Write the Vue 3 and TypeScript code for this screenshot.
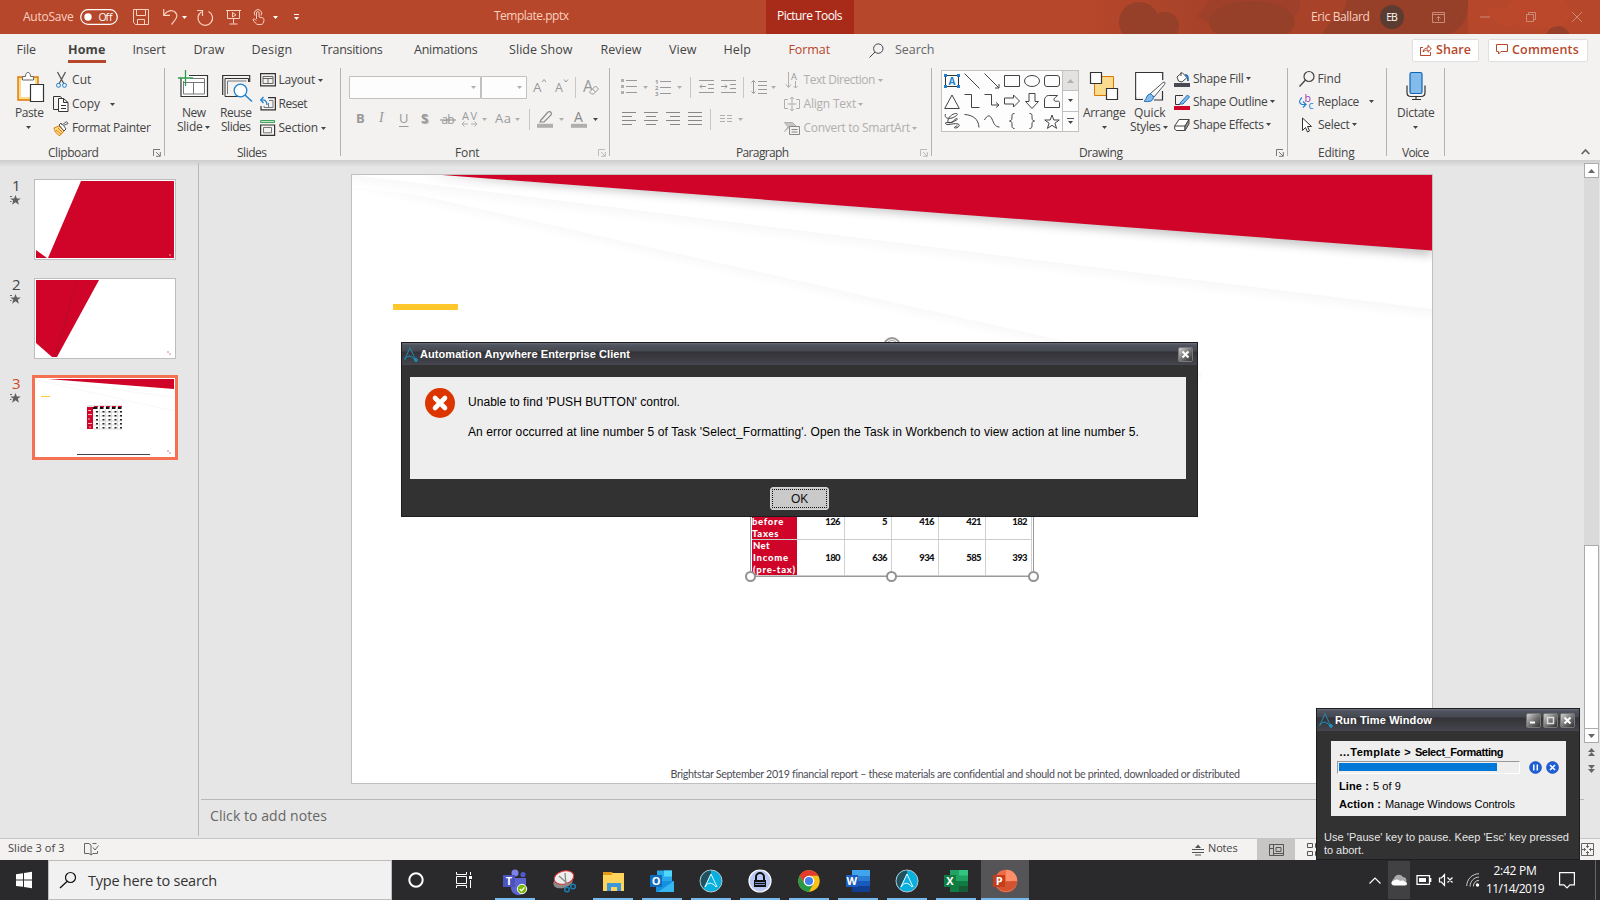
<script setup lang="ts">
import { defineComponent, h } from 'vue'
import type { PropType } from 'vue'

/* [left edge, width, text or @icon, optional class] */
type Item = [number, number, string, string?]

/* name: [width, height, markup] */
const icons: Record<string, [number, number, string]> = {
  v: [5, 3, '<path d="M0 0h5L2.5 3z" fill="currentColor" stroke="none"/>'],
  up: [7, 4, '<path d="M0 4h7L3.5 0z" fill="#666" stroke="none"/>'],
  down: [7, 4, '<path d="M0 0h7L3.5 4z" fill="#666" stroke="none"/>'],
  bar: [1, 21, '<path d="M.5 0v21" stroke="#c8c6c4"/>'],
  save: [16, 16, '<path d="M.5.5h15v15h-13l-2-2zM3.500 .5v6h9v-6M4.500 15.500v-5h7v5"/>'],
  undo: [16, 16, '<path d="M.7 0v6.300h6.300M1 6C4 1.500 9 .5 12 3c3.500 3.500 2 6-3.500 12.500" stroke-width="1.200"/>'],
  redo: [17, 17, '<path d="M11.500 2.500a7.300 7.300 0 1 1-7 .3M0 1.500h5.500V7" stroke-width="1.200"/>'],
  show: [16, 16, '<path d="M0 1.500h15M1.500 1.500v8h12v-8M7.500 9.500v5M3.500 15h8M6.500 3.500v4.500l3.500-2.200z"/>'],
  touch: [13, 16, '<path d="M3 6.500a3.700 3.700 0 1 1 6 0M4.500 10V4a1.300 1.300 0 0 1 2.600 0v4l4 1c1 .5.800 1.300.8 2.500 0 2-1 4-3 4H6c-1.800 0-3.500-2.500-5-4.800 0-1.200 1.800-1 3.500 1"/>'],
  more: [5, 6, '<path d="M0 .5h5" stroke="#fff"/><path d="M0 3h5L2.500 6z" fill="#fff" stroke="none"/>'],
  toggle: [38, 16, '<rect x=".7" y=".7" width="36.600" height="14.600" rx="7.300" stroke="#fff" stroke-width="1.200"/><circle cx="8" cy="8" r="3.700" fill="#fff" stroke="none"/><text x="18.500" y="12" font-size="10.500" fill="#fff" stroke="none" textLength="14">Off</text>'],
  eb: [24, 24, '<circle cx="12" cy="12" r="12" fill="#5c3b31" stroke="none"/><text x="6.300" y="15.800" font-size="10.500" fill="#fff" stroke="none" textLength="11.500">EB</text>'],
  ribbonopt: [13, 11, '<path d="M.5.5h12v10H.5zM.5 2.500h12M6.500 9V4.500M4.500 6.500l2-2 2 2"/>'],
  min: [10, 2, '<path d="M0 1h10"/>'],
  restore: [10, 10, '<path d="M.5 2.500h7v7h-7zM2.500 2.500v-2h7v7h-2"/>'],
  close: [10, 10, '<path d="M0 0l10 10M10 0L0 10"/>'],
  search: [15, 15, '<circle cx="9.300" cy="5.600" r="4.700"/><path d="M6 9L.5 14.500"/>'],
  share: [12, 12, '<path d="M3 3.500H.5v8h10V8M3 8c.5-3 2-4 5-4V1.200L11.300 5 8 8.200V6C6 6 4.500 6.500 3 8z" stroke="#b7472a"/>'],
  comment: [12, 11, '<path d="M.5.5h11v7H5l-2.500 2.500V7.500h-2z" stroke="#b7472a"/>'],
  launch: [8, 8, '<path d="M.5 7V.5H7M3 3l4 4M7.300 3v4.300H3" />'],
  chev: [9, 6, '<path d="M.7 5l3.800-4 3.800 4" stroke="#666" stroke-width="1.800"/>'],

  paste: [28, 34, '<path d="M1 7h20v23H1z" fill="#fbdb8e" stroke="#de7900" stroke-width="1.400"/><path d="M4 10h14v17H4z" fill="#fff" stroke="none"/><path d="M5.500 10V6.500h3C8.500 1 13.500 1 13.500 6.500h3V10z" fill="#fff" stroke="#666"/><path d="M13.500 14.500h13v17h-13z" fill="#fff" stroke="#333" stroke-width="1.200"/>'],
  cut: [11, 16, '<path d="M1.500 0L8 12M9.500 0L3 12" stroke="#555" stroke-width="1.300"/><circle cx="2.500" cy="13.300" r="2" stroke="#1e81cf"/><circle cx="8.500" cy="13.300" r="2" stroke="#1e81cf"/>'],
  copy: [16, 16, '<path d="M5 13.500H.5V.5h7l1.500 2" stroke="#333"/><path d="M5.500 2.500h5l4.500 4v9H5.500zM10.500 2.500v4H15" fill="#fff" stroke="#333"/><path d="M8 9.500h5M8 12.500h5" stroke="#333"/>'],
  painter: [16, 15, '<path d="M1 7l5-2 5 5-4 4.500c-2 0-5-3-6-7.500z" fill="#fbdb8e" stroke="#de7900"/><path d="M3 9l5 4M5 7l4.500 4.500" stroke="#de7900"/><path d="M6 4l5 6 2-2-2.500-3.500L15 2.500 13.500.7 9 4 8 2z" fill="#fff" stroke="#555"/>'],
  newslide: [31, 34, '<path d="M3 8v18.500h26.500V5.500H11" fill="#fff" stroke="#333" stroke-width="1.200"/><path d="M5.500 11v13h21V8.500H12M5.500 12.500h21M15.500 12.500V24" stroke="#777"/><path d="M7.500 0v16M0 8h15" stroke="#2b9e4b" stroke-width="1.300"/>'],
  reuse: [31, 34, '<path d="M.7 25V5.500h27V12" stroke="#333" stroke-width="1.200"/><path d="M3 26.500V8.500h23.500V12M3 26.500h16" stroke="#333"/><path d="M5.500 24V11h19" stroke="#777"/><circle cx="18.500" cy="20.500" r="6.300" fill="#fff" stroke="#1e81cf" stroke-width="1.300"/><path d="M23 25l7 6.500" stroke="#1e81cf" stroke-width="1.500"/>'],
  layout: [16, 14, '<path d="M.6.6h14.800v12.300H.6z" stroke="#333" stroke-width="1.200"/><path d="M3 3.500h10v7H3zM3 5.500h10M8 5.500v5" stroke="#666"/>'],
  reset: [16, 14, '<path d="M8 .6h7.400v12.300H1V9" stroke="#333" stroke-width="1.200"/><path d="M9 3.500h4v7H4V9M8.500 6v4" stroke="#777"/><path d="M3.500 0L.7 3l2.800 3M.7 3C5 2.500 7 4 7 8" stroke="#1e81cf" stroke-width="1.300"/>'],
  section: [16, 16, '<path d="M.6.6h14v1.800H.6z" stroke="#2b9e4b"/><path d="M.6 5h14v10.300H.6z" stroke="#333" stroke-width="1.200"/><path d="M3.500 7.500h8v5.300h-8z" stroke="#777"/>'],

  combo1: [132, 23, '<path d="M.5.500h131v22H.5z" fill="#fdfdfd" stroke="#c3c1bf"/><path d="M122 10h5l-2.500 3z" fill="#b1aeab" stroke="none"/>'],
  combo2: [46, 23, '<path d="M.5.500h45v22H.5z" fill="#fdfdfd" stroke="#c3c1bf"/><path d="M36 10h5l-2.500 3z" fill="#b1aeab" stroke="none"/>'],
  grow: [14, 16, '<text x="0" y="13" font-size="13.500" fill="#999" stroke="none">A</text><path d="M9 3l2-2.500L13 3" stroke="#999"/>'],
  shrink: [14, 16, '<text x="0" y="13" font-size="12.500" fill="#999" stroke="none">A</text><path d="M9 .5L11 3l2-2.500" stroke="#999"/>'],
  clear: [17, 18, '<text x="0" y="14" font-size="16" fill="#999" stroke="none">A</text><path d="M7.500 13l5-5 3 3-5 5h-2l-2-2zM9.500 11l3 3" fill="#f3f2f1" stroke="#999"/>'],
  ab: [16, 14, '<text x="1.500" y="11.500" font-size="12" fill="#999" stroke="none" textLength="13">ab</text><path d="M0 8h16" stroke="#888"/>'],
  av: [16, 16, '<text x="0" y="8.500" font-size="11" fill="#999" stroke="none" textLength="15">AV</text><path d="M0 13h6M9 13h6M2.500 10.500L0 13l2.500 2.500M12.500 10.500L15 13l-2.500 2.500"/>'],
  hl: [16, 17, '<path d="M4 9l7-8c3-1 4 1 3 3L7 11H3z" stroke="#888" stroke-width="1.200"/><path d="M0 12.800h16v4H0z" fill="#b1aeab" stroke="none"/>'],
  fc: [16, 17, '<text x="3" y="10.500" font-size="14" fill="#888" stroke="none">A</text><path d="M0 12.800h16v4H0z" fill="#b1aeab" stroke="none"/>'],
  bullets: [16, 16, '<path d="M5 1.500h11M5 7.500h11M5 13.500h11" stroke="#999"/><path d="M0 0h3v3H0zM0 6h3v3H0zM0 12h3v3H0z" fill="#b1aeab" stroke="none"/>'],
  numbers: [16, 17, '<path d="M5 2.500h11M5 8.500h11M5 14.500h11" stroke="#999"/><text font-size="6" fill="#999" stroke="none" font-weight="700"><tspan x="0" y="5">1</tspan><tspan x="0" y="11">2</tspan><tspan x="0" y="17">3</tspan></text>'],
  outdent: [15, 14, '<path d="M0 .5h15M9 4.500h6M9 8.500h6M0 12.500h15M1 6.500h6M3 4.500l-2 2 2 2" stroke="#999"/>'],
  indent: [15, 14, '<path d="M0 .5h15M9 4.500h6M9 8.500h6M0 12.500h15M0 6.500h6M4 4.500l2 2-2 2" stroke="#999"/>'],
  spacing: [16, 16, '<path d="M7 2.500h9M7 6.500h9M7 10.500h9M7 14.500h9M2.500 1.500v13M.5 3.500l2-2 2 2M.5 12.500l2 2 2-2" stroke="#999"/>'],
  al: [14, 14, '<path d="M0 .5h14M0 4.500h10M0 8.500h14M0 12.500h10" stroke="#888"/>'],
  ac: [14, 14, '<path d="M0 .5h14M2 4.500h10M0 8.500h14M2 12.500h10" stroke="#888"/>'],
  ar: [14, 14, '<path d="M0 .5h14M4 4.500h10M0 8.500h14M4 12.500h10" stroke="#888"/>'],
  aj: [14, 14, '<path d="M0 .5h14M0 4.500h14M0 8.500h14M0 12.500h14" stroke="#888"/>'],
  cols: [12, 8, '<path d="M0 .5h5M7 .5h5M0 3.500h5M7 3.500h5M0 6.500h5M7 6.500h5"/>'],
  tdir: [15, 17, '<path d="M3.500 0v15M1 12.500l2.500 3 2.500-3M10.500 9v7M8.500 14l2 2 2-2"/><text x="6" y="7.500" font-size="9.500" fill="#999" stroke="none">A</text>'],
  atext: [16, 15, '<path d="M4 2.500H.5v9H4M12 2.500h3.500v9H12M8 0v14M6 2l2-2 2 2M6 12l2 2 2-2M3.500 7h9"/>'],
  smart: [16, 14, '<path d="M.5 1.500h8l4 4H6L.5 10.500 4 6z" fill="#c8c6c4"/><path d="M5.500 5.500h10v8h-10zM7.500 8.500h6M7.500 11h6" fill="#f3f2f1" stroke="#888"/>'],

  tb: [16, 14, '<path d="M1.500 1.500h13v11h-13z" stroke="#333"/><path d="M0 0h3v3H0zM13 0h3v3h-3zM0 11h3v3H0zM13 11h3v3h-3z" fill="#1e81cf" stroke="none"/><text x="4.500" y="10.800" font-size="10" font-weight="700" fill="#1e81cf" stroke="none">A</text>'],
  line: [16, 16, '<path d="M.5.5l15 15"/>'],
  arrow: [16, 16, '<path d="M.5.5l14 14M15 11v4h-4"/>'],
  rect: [16, 12, '<path d="M.5.500h15v11H.5z"/>'],
  oval: [16, 12, '<ellipse cx="8" cy="6" rx="7.500" ry="5.500"/>'],
  rrect: [16, 12, '<rect x=".5" y=".5" width="15" height="11" rx="2.500"/>'],
  tri: [16, 15, '<path d="M8 1l7.300 13.500H.7z"/>'],
  elbow: [16, 14, '<path d="M.5.5h7v13h8"/>'],
  elbowa: [16, 16, '<path d="M.5 1.500h7v10.500h7M12 9.500l3 2.500-3 2.500"/>'],
  rarr: [16, 14, '<path d="M.5 4h9V1l6 6-6 6v-3h-9z"/>'],
  darr: [14, 16, '<path d="M4 .5h6v8h3.500l-6.500 7-6.500-7H4z"/>'],
  free: [16, 15, '<path d="M4.500 1.500h9c-1 2-4 2-3.500 4.500 1 3 5-.5 5.500 2.500v5H.5V6c0-2 1.500-4.500 4-4.500z"/>'],
  scrib: [16, 16, '<path d="M1.500 1C0 5 4 6 8 5c4-1.500 7-4 4.500-4.500S5 3 4 7c-1 4 4 3.500 6.500 0 2-3 4-1 2 0S8 10 4 9.500s-3 2 0 2 7-1.500 10-.5 0 4-2.500 4-.5-2 2-2"/>'],
  arc: [16, 14, '<path d="M.5.5C9 1 14.500 5 15 13.500"/>'],
  curve: [16, 13, '<path d="M.5 5C3 0 6-.5 8 4s3 8 7.500 8"/>'],
  lb: [6, 16, '<path d="M5.500.5C3 .5 3 1.500 3 3.500S3 8 .5 8C3 8 3 10 3 12s0 3.500 2.500 3.500"/>'],
  rb: [6, 16, '<path d="M.5.5C3 .5 3 1.500 3 3.500S3 8 5.500 8C3 8 3 10 3 12s0 3.500-2.500 3.500"/>'],
  star: [16, 15, '<path d="M8 1l1.800 5h5.500l-4.400 3.200 1.700 5.200L8 11.300l-4.600 3.100 1.700-5.200L.7 6h5.500z"/>'],
  arrange: [28, 34, '<path d="M4.500 6.500h19v19h-19z" fill="#fbdb8e" stroke="#de7900"/><path d="M.5 2.500h11v11H.5zM16.500 18.500h11v11h-11z" fill="#fff" stroke="#333" stroke-width="1.200"/>'],
  quick: [31, 34, '<path d="M8 29.500H.7V2.500h27V10M27.500 21v9H19" fill="none" stroke="#333" stroke-width="1.200"/><path d="M1.500 3h25v12l-12 12h-13z" fill="#fff" stroke="none"/><path d="M15 24L28 12.500c2-1 2.500 0 1.500 2L19 27z" fill="#fff" stroke="#555"/><path d="M9 31c3-1 2-7 6.500-7 4 1 4 7-1.500 7.500-2 .3-4 0-5-.5z" fill="#83bcec" stroke="#1e6fb8"/>'],
  fill: [16, 16, '<path d="M3 6l5-4.500 5 5-5 4.500-3.500-1z" fill="#fff" stroke="#444"/><path d="M7 5V1.500" stroke="#444"/><path d="M11 4c3 0 3 2 3 6" stroke="#1e6fb8" stroke-width="1.800"/><path d="M0 12h16v4H0z" fill="#4a4a55" stroke="none"/>'],
  outline: [16, 16, '<path d="M9 1.500H1.500v9H6" stroke="#333"/><path d="M6 9l7.500-8 2 2L9 10H6z" fill="#83bcec" stroke="#1e6fb8"/><path d="M0 12h16v4H0z" fill="#d10429" stroke="none"/>'],
  effects: [16, 14, '<path d="M.7 8L5 1.500h10L11 8zM.7 8v3l1.500 1.500H11L11 8" fill="#fff" stroke="#444"/><path d="M11 8l4-6.500v4.500L11 12.500z" fill="#999" stroke="#444"/>'],
  find: [16, 16, '<circle cx="10" cy="5.500" r="5" stroke="#444" stroke-width="1.200"/><path d="M6.500 9L.5 15.500" stroke="#444" stroke-width="1.300"/>'],
  replace: [15, 17, '<text x="5.500" y="8.500" font-size="10.500" fill="#a33bb5" stroke="none">b</text><text x="9.500" y="16" font-size="10.500" fill="#1e81cf" stroke="none">c</text><path d="M3 4.500c-3.500 3-3 6 0 7h3.500M4 8.500l3 3-3 3" stroke="#1e81cf" stroke-width="1.200"/>'],
  select: [11, 16, '<path d="M1.500 1v12.500l3-3 2 4.500 2-1-2-4.500h4z" fill="#fff" stroke="#333"/>'],
  mic: [20, 34, '<rect x="4" y="2.500" width="12" height="21" rx="1.500" fill="#83bcec" stroke="#1265b0" stroke-width="1.200"/><path d="M1 15.500v7c0 3 1.500 4 4 4h10c2.500 0 4-1 4-4v-7M10 26.500v3M6 29.500h9" stroke="#333" stroke-width="1.200"/>'],

  anim: [11, 10, '<path d="M5.500 0l1.400 3.400h3.900L7.800 5.700l1.100 4-3.400-2.400-3.400 2.400 1.100-4-3-2.300h3.900z" fill="#606060" stroke="none"/><path d="M0 1.500h2M0 6.500h1.500" stroke="#666"/>'],
  spell: [15, 13, '<path d="M7 12L5 10.500H.5V.5H5l2 1.500v10l2-1.500h4.500V8M8.500.500h4M9 4.500l2 2.500 3.500-4.500" stroke="#666"/>'],
  notes: [12, 11, '<path d="M0 5.500h12M0 8.500h12M3 11h6" stroke="#555"/><path d="M3 4l3-3.500L9 4z" fill="#555" stroke="none"/>'],
  normal: [15, 12, '<path d="M.5.500h14v11H.5zM4.500 1v10M.5 4.500h4M7 3.500h5v4H7zM5 9.500h9" stroke="#555"/>'],
  sorter: [15, 14, '<path d="M.5.500h5v4h-5zM.5 8.500h5v4h-5zM8.500.500h5v4h-5zM8.500 8.500h5v4h-5z" stroke="#555"/>'],
  fitw: [13, 13, '<path d="M.5.500h12v12H.5zM6.500 1v4M6.500 8v4M1 6.500h4M8 6.500h4M5 3.500h3M5 9.500h3M3.500 5v3M9.500 5v3" stroke="#666"/>'],

  win: [16, 16, '<path d="M0 2.200L7 1.200v6.300H0zM8 1l8-1.200v7.700H8zM0 8.500h7v6.300L0 14zM8 8.500h8v7.700L8 15z" fill="#fff" stroke="none"/>'],
  find2: [16, 16, '<circle cx="10.500" cy="5.500" r="5" stroke="#111" stroke-width="1.200"/><path d="M7 9.500L0 16" stroke="#111" stroke-width="1.300"/>'],
  cortana: [16, 16, '<circle cx="8" cy="8" r="6.700" stroke="#fff" stroke-width="2"/>'],
  tview: [17, 16, '<path d="M.5 0v2.500h10V0M.5 16v-2.500h10V16M.5 4.500h10v7H.5zM14.500 0v3M14.500 8v8" stroke="#fff"/><path d="M13 4h3v3h-3z" fill="#fff" stroke="none"/>'],
  tup: [12, 7, '<path d="M.5 6.500L6 1l5.500 5.500" stroke="#fff" stroke-width="1.200"/>'],
  cloud: [17, 12, '<path d="M4 11a3.500 3.500 0 0 1-1-6.500A5 5 0 0 1 12 3c3 0 4 3 3 5z" fill="#aaa" stroke="none"/><path d="M3 11.500c-3-.3-4-4 0-5 3-1.500 4-1 6 .5 2-1 4-.5 4.500.8 3 0 3.500 3.500.5 3.700z" fill="#fff" stroke="none"/>'],
  battery: [16, 10, '<path d="M1 .7h12.500v8.600H1zM14.700 3v4" stroke="#fff" stroke-width="1.300"/><path d="M3 3h7v4H3z" fill="#fff" stroke="none"/>'],
  mute: [15, 12, '<path d="M.5 4v4h2L5.500 11.500V.5L2.500 4zM8.500 3.500l5 5M13.500 3.500l-5 5" stroke="#fff" stroke-width="1.200"/>'],
  wifi: [14, 14, '<path d="M.7 13C1 6 6 1 13 .7M4 13.500C4.300 8 8 4.300 13 4M7.300 13.500c.2-3.500 2.500-6 5.700-6.200" stroke="#ccc"/><circle cx="11.500" cy="12" r="1.700" fill="#fff" stroke="none"/>'],
  action: [16, 17, '<path d="M.6.6h14.800v12.300h-4.400l-3 3-3-3H.6z" stroke="#fff" stroke-width="1.200"/>'],
  aa: [14, 15, '<path d="M.7 12.500L6 .7l5.500 12" stroke="#2a7c98" stroke-width="1.100"/><path d="M.7 12.500c2-4 6-5 10 .2" stroke="#1496c8"/><circle cx="12" cy="13" r="1.300" stroke="#14b0ea"/>'],
  pause: [13, 13, '<circle cx="6.500" cy="6.500" r="6" fill="#1d5fd8" stroke="#1746a8" stroke-width=".6"/><path d="M4.800 3.500v6M8.300 3.500v6" stroke="#fff" stroke-width="1.500"/>'],
  stop: [13, 13, '<circle cx="6.500" cy="6.500" r="6" fill="#1d5fd8" stroke="#1746a8" stroke-width=".6"/><path d="M4 4l5 5M9 4L4 9" stroke="#fff" stroke-width="1.600"/>'],
  error: [30, 30, '<circle cx="15" cy="15" r="15" fill="#dc3500" stroke="none"/><path d="M10 10l10 10M20 10L10 20" stroke="#fff" stroke-width="4.600" stroke-linecap="round"/>'],
  wx: [15, 15, '<rect x=".5" y=".5" width="14" height="14" rx="1.500" fill="url(#chrome)" stroke="#777"/><path d="M4.500 4.500l6 6M10.500 4.500l-6 6" stroke="#fff" stroke-width="2"/>'],
  wmin: [15, 15, '<rect x=".5" y=".5" width="14" height="14" rx="1.500" fill="url(#chrome)" stroke="#777"/><path d="M4 9.500h5" stroke="#fff" stroke-width="2"/>'],
  wmax: [15, 15, '<rect x=".5" y=".5" width="14" height="14" rx="1.500" fill="url(#chrome)" stroke="#777"/><path d="M4.500 4.500h6v6h-6z" stroke="#ddd" stroke-width="1.500"/>'],

  teams: [24, 24, '<circle cx="12" cy="4" r="3.500" fill="#7b83eb" stroke="none"/><circle cx="20" cy="5.500" r="2.600" fill="#5059c9" stroke="none"/><path d="M8 9h15v8a6 6 0 0 1-15 3z" fill="#5b63d0" stroke="none"/><path d="M0 6h12v12H0z" fill="#4b53bc" stroke="none"/><text x="2.700" y="16.300" font-size="11" font-weight="700" fill="#fff" stroke="none">T</text><circle cx="19" cy="20" r="4.700" fill="#76b900" stroke="#fff"/><path d="M16.800 20l1.700 1.700 3-3.300" stroke="#fff" stroke-width="1.400"/>'],
  snip: [24, 24, '<ellipse cx="11" cy="13" rx="10" ry="6" fill="#8b8b8b" stroke="none" transform="rotate(-15 11 13)"/><ellipse cx="12" cy="8.500" rx="10" ry="6.500" fill="#eee" stroke="#d33" transform="rotate(-15 12 8.500)"/><path d="M7 7l10 9M13 4l1 12" stroke="#888" stroke-width="1.300"/><circle cx="15" cy="20.500" r="2.300" stroke="#1b7fb5" stroke-width="1.500"/><circle cx="21" cy="17.500" r="2.300" stroke="#1b7fb5" stroke-width="1.500"/>'],
  folder: [24, 24, '<path d="M2 3h8l2 1h11v18H2z" fill="#ffd35c" stroke="none"/><path d="M2 3h9v3H2z" fill="#e09a16" stroke="none"/><path d="M6 22v-8h14v8h-4v-4h-6v4z" fill="#3b97db" stroke="none"/>'],
  outlook: [24, 24, '<path d="M7 1.500h15V13H7z" fill="#28a8ea" stroke="none"/><path d="M14 1.500h8v6h-8z" fill="#50d9ff" stroke="none"/><path d="M6 12h18v11H6z" fill="#1490df" stroke="none"/><path d="M24 12L8 23h16z" fill="#35b8f1" stroke="none"/><path d="M0 6h12v12H0z" fill="#0f6cbd" stroke="none"/><text x="1.800" y="16" font-size="11" font-weight="700" fill="#fff" stroke="none">O</text>'],
  aabig: [24, 24, '<circle cx="12" cy="12" r="11" fill="#08b0e0" stroke="#b8c4c8"/><path d="M12 1.500a10.500 10.500 0 0 0-7.500 17.500L12 4z" fill="#24505e" stroke="none"/><path d="M6 18l6-13 6 13M6 18c3-5 7-5 11 0" stroke="#e8fbff"/>'],
  lock: [24, 24, '<circle cx="12" cy="12" r="11" fill="#b9c8f5" stroke="#fff" stroke-width="1.200"/><path d="M8 11V8a4 4 0 0 1 8 0v3" stroke="#111" stroke-width="2"/><path d="M6 11h12v7H6z" fill="#111" stroke="none"/><path d="M7 13.500h10M7 15.500h10" stroke="#7d8fca"/>'],
  chrome: [24, 24, '<circle cx="12" cy="12" r="10.700" fill="#fbc116" stroke="none"/><path d="M2.700 6.700A10.700 10.700 0 0 1 21.300 6.700H12l-4.600 8z" fill="#e33b2e" stroke="none"/><path d="M2.700 6.700A10.700 10.700 0 0 0 12 22.700l4.500-8-9 0z" fill="#269a48" stroke="none"/><circle cx="12" cy="12" r="4.700" fill="#3f80ed" stroke="#fff" stroke-width="1.300"/>'],
  word: [24, 24, '<path d="M6 1h18v6H6z" fill="#41a5ee" stroke="none"/><path d="M6 7h18v5H6z" fill="#2b7cd3" stroke="none"/><path d="M6 12h18v5H6z" fill="#185abd" stroke="none"/><path d="M6 17h18v6H6z" fill="#103f91" stroke="none"/><path d="M0 6h12v12H0z" fill="#1a5dbe" stroke="none"/><text x=".6" y="16" font-size="11" font-weight="700" fill="#fff" stroke="none">W</text>'],
  excel: [24, 24, '<path d="M6 1h18v11H6z" fill="#21a366" stroke="none"/><path d="M15 1h9v5.500h-9z" fill="#33c481" stroke="none"/><path d="M6 12h18v11H6z" fill="#107c41" stroke="none"/><path d="M15 17h9v6h-9z" fill="#185c37" stroke="none"/><path d="M0 6h12v12H0z" fill="#107c41" stroke="none"/><text x="2.300" y="16" font-size="11" font-weight="700" fill="#fff" stroke="none">X</text>'],
  ppt: [24, 24, '<circle cx="13" cy="12" r="11.300" fill="#ed6c47" stroke="none"/><path d="M13 .7a11.300 11.300 0 0 1 11.300 11.300H13z" fill="#ff8f6b" stroke="none"/><path d="M2 13a11.300 11.300 0 0 0 22.300-1z" fill="#d35230" stroke="none"/><path d="M0 6h12v12H0z" fill="#c43e1c" stroke="none"/><text x="2.800" y="16" font-size="11" font-weight="700" fill="#fff" stroke="none">P</text>'],
}

/* Spreads the letters of a label over a given width. */
function fit(el: HTMLElement, width: number) {
  const range = document.createRange()
  range.selectNodeContents(el)
  const natural = range.getBoundingClientRect().width
  const count = (el.textContent ?? '').length
  if (count) el.style.letterSpacing = `${(width - natural) / count}px`
}
const vFit = { mounted: (el: HTMLElement, b: { value: number }) => fit(el, b.value) }

const Icon = defineComponent({
  props: { name: { type: String, required: true } },
  setup: (p) => () => {
    const [w, hgt, markup] = icons[p.name]
    return h('svg', {
      class: 'icon', width: w, height: hgt, viewBox: `0 0 ${w} ${hgt}`,
      fill: 'none', stroke: 'currentColor', innerHTML: markup,
    })
  },
})

const Strip = defineComponent({
  props: {
    from: { type: Number, default: 0 },
    items: { type: Array as PropType<Item[]>, required: true },
  },
  setup: (p) => () => {
    let pos = p.from
    const kids = p.items.map(([x, w, what, cls]) => {
      const gap = x - pos
      pos = x + w
      const style = { marginLeft: `${gap}px`, width: `${w}px` }
      if (what.startsWith('@')) return h('span', { class: ['cell', cls], style }, [h(Icon, { name: what.slice(1) })])
      return h('span', {
        class: ['label', cls], style,
        onVnodeMounted: (n: any) => fit(n.el as HTMLElement, w - 0.5),
      }, what)
    })
    return h('div', { class: 'strip' }, kids)
  },
})

const titleItems: Item[] = [
  [23, 51, 'AutoSave'], [80, 38, '@toggle'], [133, 16, '@save'], [163, 16, '@undo'], [182, 5, '@v', 'white'],
  [197, 17, '@redo'], [226, 16, '@show'], [252, 13, '@touch'], [273, 5, '@v', 'white'], [294, 5, '@more'],
  [494, 75, 'Template.pptx', 'raise'],
  [1311, 59, 'Eric Ballard'], [1380, 24, '@eb'], [1432, 13, '@ribbonopt', 'dim'], [1480, 10, '@min', 'dim'],
  [1526, 10, '@restore', 'dim'], [1572, 10, '@close', 'dim'],
]
const tabs: Item[] = [
  [16.5, 20, 'File'], [68, 38, 'Home', 'on'], [132.5, 33.5, 'Insert'], [193.5, 31.5, 'Draw'], [251.5, 41.5, 'Design'],
  [321, 62, 'Transitions'], [414, 64, 'Animations'], [509, 64, 'Slide Show'], [600.5, 41.5, 'Review'],
  [669, 28, 'View'], [723.5, 28, 'Help'], [788.5, 42, 'Format', 'red'], [869, 15, '@search'], [895, 40, 'Search', 'grey'],
]
const clip: Item[][] = [
  [[56, 11, '@cut'], [72, 20, 'Cut']],
  [[53, 16, '@copy'], [72, 28.5, 'Copy'], [110, 5, '@v']],
  [[53, 16, '@painter'], [72, 79, 'Format Painter']],
]
const slideRows: Item[][] = [
  [[260, 16, '@layout'], [278.5, 37, 'Layout'], [318, 5, '@v']],
  [[260, 16, '@reset'], [278.5, 29, 'Reset']],
  [[260, 16, '@section'], [278.5, 40, 'Section'], [321, 5, '@v']],
]
const font1: Item[] = [
  [349, 132, '@combo1'], [481, 46, '@combo2'], [533, 14, '@grow'], [555, 14, '@shrink'], [575, 1, '@bar'], [583, 17, '@clear'],
]
const font2: Item[] = [
  [356, 8, 'B', 'fmt b'], [379, 6, 'I', 'fmt i'], [399, 10, 'U', 'fmt u'], [421, 8, 'S', 'fmt b s'], [440, 16, '@ab'],
  [462, 16, '@av'], [482, 5, '@v'], [495, 17, 'Aa', 'fmt'], [515, 5, '@v'], [529, 1, '@bar'],
  [537, 16, '@hl'], [559, 5, '@v'], [571, 16, '@fc'], [593, 5, '@v', 'dark'],
]
const para1: Item[] = [
  [621, 16, '@bullets'], [643, 5, '@v'], [655, 16, '@numbers'], [677, 5, '@v'], [690, 1, '@bar'],
  [699, 15, '@outdent'], [721, 15, '@indent'], [743, 1, '@bar'], [751, 16, '@spacing'], [771, 5, '@v'],
]
const para2: Item[] = [
  [622, 14, '@al'], [644, 14, '@ac'], [666, 14, '@ar'], [688, 14, '@aj'], [710, 1, '@bar'], [720, 12, '@cols'], [738, 5, '@v'],
]
const paraRows: Item[][] = [
  [[785, 15, '@tdir'], [803.5, 72, 'Text Direction'], [878, 5, '@v']],
  [[784, 16, '@atext'], [803.5, 53, 'Align Text'], [858, 5, '@v']],
  [[784, 16, '@smart'], [803.5, 107, 'Convert to SmartArt'], [912, 5, '@v']],
]
const shapes = ['tb', 'line', 'arrow', 'rect', 'oval', 'rrect', 'tri', 'elbow', 'elbowa', 'rarr', 'darr', 'free', 'scrib', 'arc', 'curve', 'lb', 'rb', 'star']
const drawRows: Item[][] = [
  [[1174, 16, '@fill'], [1193, 51, 'Shape Fill'], [1246, 5, '@v']],
  [[1174, 16, '@outline'], [1193, 75, 'Shape Outline'], [1270, 5, '@v']],
  [[1174, 16, '@effects'], [1193, 71, 'Shape Effects'], [1266, 5, '@v']],
]
const editRows: Item[][] = [
  [[1299, 16, '@find'], [1317.5, 24, 'Find']],
  [[1299, 15, '@replace'], [1317.5, 42, 'Replace'], [1369, 5, '@v']],
  [[1301, 11, '@select'], [1318, 32, 'Select'], [1352, 5, '@v']],
]
const statusItems: Item[] = [
  [8, 57, 'Slide 3 of 3'], [84, 15, '@spell'], [1192, 12, '@notes'], [1208, 30, 'Notes'],
  [1257, 38, '@normal', 'picked'], [1307, 15, '@sorter'], [1581, 13, '@fitw'],
]
const trayItems: Item[] = [
  [1369, 12, '@tup'], [1388, 22, '@cloud', 'lit'], [1416, 16, '@battery'], [1439, 15, '@mute'], [1466, 14, '@wifi'],
]
const apps = [
  { icon: 'teams', run: true }, { icon: 'snip', run: false }, { icon: 'folder', run: true }, { icon: 'outlook', run: true },
  { icon: 'aabig', run: true }, { icon: 'lock', run: true }, { icon: 'chrome', run: true }, { icon: 'word', run: true },
  { icon: 'aabig', run: true }, { icon: 'excel', run: true }, { icon: 'ppt', run: true, active: true },
]
const rows = [
  { labels: [['before', 32], ['Taxes', 27]] as [string, number][], values: [126, 5, 416, 421, 182] },
  { labels: [['Net', 17], ['Income', 36], ['(pre-tax)', 43]] as [string, number][], values: [180, 636, 934, 585, 393] },
]
</script>

<template>
  <div class="desktop">
    <svg class="defs" width="0" height="0">
      <defs>
        <linearGradient id="chrome" x1="0" y1="0" x2="1" y2="1">
          <stop offset="0" stop-color="#d8d8d8" /><stop offset=".5" stop-color="#777" /><stop offset="1" stop-color="#2c2c2c" />
        </linearGradient>
      </defs>
    </svg>

    <header class="titlebar">
      <svg class="clouds" width="520" height="34" viewBox="0 0 520 34">
        <defs>
          <linearGradient id="fade" x1="0" x2="1" y1="0" y2="0">
            <stop offset="0" stop-color="#a8432a" stop-opacity="0" /><stop offset=".3" stop-color="#a8432a" />
          </linearGradient>
        </defs>
        <rect width="388" height="34" fill="url(#fade)" />
        <g fill="#963f29">
          <circle cx="59" cy="22" r="20" /><circle cx="85" cy="26" r="14" />
          <path d="M130 0h90v10q-20 24-44 12-30 14-60-6z" opacity=".5" />
          <ellipse cx="172" cy="22" rx="43" ry="21" />
          <path d="M243 34c4-14 20-14 24-34h121c0 20-6 28-18 34z" />
          <circle cx="478" cy="38" r="12" />
        </g>
        <path d="M405 12q10-8 20-2 4-14 30-10h30q14 20-6 26-20 6-40-2-16 6-24-4z" fill="#c24a2b" opacity=".5" />
      </svg>
      <Strip class="title-strip" :items="titleItems" />
      <div class="picture-tools"><span v-fit="65">Picture Tools</span></div>
    </header>

    <nav class="tabs">
      <Strip :items="tabs" />
      <div class="actions">
        <button class="share"><Icon name="share" /><span v-fit="35">Share</span></button>
        <button class="comments"><Icon name="comment" /><span v-fit="67">Comments</span></button>
      </div>
    </nav>

    <section class="ribbon">
      <div class="group g-clip">
        <div class="body">
          <div class="big w50">
            <Strip class="pic" :items="[[17, 28, '@paste']]" />
            <Strip class="l1" :items="[[15, 29, 'Paste']]" />
            <Strip class="l2" :items="[[26, 5, '@v']]" />
          </div>
          <div class="rows24"><Strip v-for="(r, i) in clip" :key="i" :from="50" :items="r" /></div>
        </div>
        <Strip class="foot" :items="[[48, 51, 'Clipboard'], [153, 8, '@launch', 'mid']]" />
      </div>
      <div class="group g-slides">
        <div class="body">
          <div class="big w50">
            <Strip class="pic" :from="165" :items="[[178, 31, '@newslide']]" />
            <Strip class="l1" :from="165" :items="[[182, 24, 'New']]" />
            <Strip class="l2" :from="165" :items="[[177, 26, 'Slide'], [205, 5, '@v']]" />
          </div>
          <div class="big w40">
            <Strip class="pic" :from="215" :items="[[222, 31, '@reuse']]" />
            <Strip class="l1" :from="215" :items="[[220, 32, 'Reuse']]" />
            <Strip class="l2" :from="215" :items="[[221, 30, 'Slides']]" />
          </div>
          <div class="rows24"><Strip v-for="(r, i) in slideRows" :key="i" :from="255" :items="r" /></div>
        </div>
        <Strip class="foot" :from="165" :items="[[237, 30, 'Slides']]" />
      </div>
      <div class="group g-font off">
        <div class="body stack">
          <Strip class="r1" :from="341" :items="font1" />
          <Strip class="r2" :from="341" :items="font2" />
        </div>
        <Strip class="foot" :from="341" :items="[[455, 25, 'Font'], [598, 8, '@launch', 'pale']]" />
      </div>
      <div class="group g-para off">
        <div class="body">
          <div class="stack w170">
            <Strip class="r1" :from="610" :items="para1" />
            <Strip class="r2" :from="610" :items="para2" />
          </div>
          <div class="rows24"><Strip v-for="(r, i) in paraRows" :key="i" :from="780" :items="r" /></div>
        </div>
        <Strip class="foot" :from="610" :items="[[736, 53, 'Paragraph'], [920, 8, '@launch', 'pale']]" />
      </div>
      <div class="group g-draw">
        <div class="body">
          <div class="gallery">
            <div class="shapes"><span v-for="s in shapes" :key="s"><Icon :name="s" /></span></div>
            <div class="spin"><i class="pale"><Icon name="up" /></i><i><Icon name="v" /></i><i><b></b><Icon name="v" /></i></div>
          </div>
          <div class="big w48">
            <Strip class="pic" :from="1079" :items="[[1090, 28, '@arrange']]" />
            <Strip class="l1" :from="1079" :items="[[1083, 43, 'Arrange']]" />
            <Strip class="l2" :from="1079" :items="[[1102, 5, '@v']]" />
          </div>
          <div class="big w43">
            <Strip class="pic" :from="1127" :items="[[1135, 31, '@quick']]" />
            <Strip class="l1" :from="1127" :items="[[1134, 32, 'Quick']]" />
            <Strip class="l2" :from="1127" :items="[[1130, 31, 'Styles'], [1163, 5, '@v']]" />
          </div>
          <div class="rows23"><Strip v-for="(r, i) in drawRows" :key="i" :from="1170" :items="r" /></div>
        </div>
        <Strip class="foot" :from="932" :items="[[1079, 44, 'Drawing'], [1276, 8, '@launch', 'mid']]" />
      </div>
      <div class="group g-edit">
        <div class="body">
          <div class="rows23"><Strip v-for="(r, i) in editRows" :key="i" :from="1288" :items="r" /></div>
        </div>
        <Strip class="foot" :from="1288" :items="[[1318, 37, 'Editing']]" />
      </div>
      <div class="group g-voice">
        <div class="body">
          <div class="big">
            <Strip class="pic" :from="1387" :items="[[1406, 20, '@mic']]" />
            <Strip class="l1" :from="1387" :items="[[1397, 38, 'Dictate']]" />
            <Strip class="l2" :from="1387" :items="[[1413, 5, '@v']]" />
          </div>
        </div>
        <Strip class="foot" :from="1387" :items="[[1402, 27, 'Voice']]" />
      </div>
      <div class="collapse"><Icon name="chev" /></div>
    </section>

    <main class="workspace">
      <aside class="nav">
        <div class="thumb">
          <div class="num"><span>1</span><Icon name="anim" /></div>
          <div class="frame">
            <svg width="138" height="77" viewBox="0 0 138 77">
              <path d="M45 0h93v77H12zM0 69l11 8H0z" fill="#d00428" /><path d="M133 74h2" stroke="#f3a0ae" />
            </svg>
          </div>
        </div>
        <div class="thumb">
          <div class="num"><span>2</span><Icon name="anim" /></div>
          <div class="frame">
            <svg width="138" height="77" viewBox="0 0 138 77">
              <path d="M0 0h63L21 77h-5L0 63z" fill="#d00428" /><path d="M41 0L19 77" stroke="#bb0a2a" stroke-width="1.500" />
              <path d="M131 72h2" stroke="#999" /><path d="M133 74h2" stroke="#f07a8c" />
            </svg>
          </div>
        </div>
        <div class="thumb current">
          <div class="num"><span>3</span><Icon name="anim" /></div>
          <div class="frame">
            <svg width="138" height="78" viewBox="0 0 138 78">
              <path d="M12 0h126v10z" fill="#d00428" /><path d="M0 1l138 17M0 1l138 31" stroke="#f8f8f8" />
              <path d="M5 17.500h9" stroke="#ffc72c" />
              <path d="M51 27h35" stroke="#ccc" /><path d="M57 29h29" stroke="#111" stroke-width="2" stroke-dasharray="4.500 1.500" />
              <path d="M58 27.500h28" stroke="#d00428" stroke-dasharray="4 2" />
              <path d="M51 28h6v22h-6z" fill="#d00428" /><path d="M52 31.500h3M52 35.500h4M52 40h2M52 44.500h4M53 48h2" stroke="#f5b5c0" />
              <path d="M57 33h29M57 37h29M57 42h29M57 46h29M57 50h29M63.500 28v22M69.500 28v22M75.500 28v22M81.500 28v22" stroke="#ddd" />
              <path d="M61 32v18M67.500 32v18M73.500 32v18M79.500 32v18M85 32v18" stroke="#222" stroke-width="2" stroke-dasharray="1.500 2.500" />
              <path d="M41 75.500h73" stroke="#445" stroke-width="1.200" /><path d="M131 72h2" stroke="#999" /><path d="M133 74h2" stroke="#f07a8c" />
            </svg>
          </div>
        </div>
      </aside>

      <section class="main">
        <div class="slide">
          <svg width="1080" height="608" viewBox="0 0 1080 608">
            <defs>
              <filter id="soft" x="-5%" y="-20%" width="110%" height="160%"><feGaussianBlur stdDeviation="5" /></filter>
              <linearGradient id="ray1" gradientUnits="userSpaceOnUse" x1="540" y1="67" x2="538.500" y2="79"><stop offset="0" stop-color="#f8f8f8" /><stop offset="1" stop-color="#fff" /></linearGradient>
              <linearGradient id="ray2" gradientUnits="userSpaceOnUse" x1="540" y1="127" x2="537.500" y2="138"><stop offset="0" stop-color="#f9f9f9" /><stop offset="1" stop-color="#fff" /></linearGradient>
            </defs>
            <path d="M0 5L850 197v14L0 16z" fill="url(#ray2)" />
            <path d="M0 0L1080 134v14L0 12z" fill="url(#ray1)" />
            <path d="M70 0H1080V81z" fill="#000" opacity=".22" filter="url(#soft)" />
            <path d="M90 0H1080V75.500z" fill="#d00428" />
            <path d="M41 129h65v6H41z" fill="#ffc72c" />
          </svg>
          <div class="table">
            <div v-for="(r, i) in rows" :key="i" class="trow" :class="'q' + i">
              <div class="th"><span v-for="l in r.labels" :key="l[0]" v-fit="l[1]">{{ l[0] }}</span></div>
              <div v-for="n in r.values" :key="n" class="td"><span v-fit="String(n).length * 4.900">{{ n }}</span></div>
            </div>
          </div>
          <div class="selection"><i class="rot"></i><i class="h a"></i><i class="h b"></i><i class="h c"></i></div>
          <div class="disclaimer"><span v-fit="569">Brightstar September 2019 financial report – these materials are confidential and should not be printed, downloaded or distributed</span></div>
        </div>
        <div class="notes"><span v-fit="117">Click to add notes</span></div>
      </section>

      <aside class="vscroll">
        <i class="sb"><Icon name="up" /></i>
        <div class="track"><div class="grip"></div></div>
        <i class="sb"><Icon name="down" /></i>
        <div class="jump"><Icon name="up" /><Icon name="up" /></div>
        <div class="jump second"><Icon name="down" /><Icon name="down" /></div>
      </aside>
    </main>

    <footer class="status"><Strip :items="statusItems" /></footer>

    <footer class="taskbar">
      <div class="start"><Icon name="win" /></div>
      <div class="searchbox"><Icon name="find2" /><span v-fit="129">Type here to search</span></div>
      <Strip class="sys" :from="392" :items="[[408, 16, '@cortana'], [456, 17, '@tview']]" />
      <div class="apps">
        <div v-for="(a, i) in apps" :key="i" class="app" :class="{ run: a.run, active: a.active }"><Icon :name="a.icon" /></div>
      </div>
      <div class="tray">
        <Strip :from="1360" :items="trayItems" />
        <div class="clock"><span v-fit="43">2:42 PM</span><span v-fit="58">11/14/2019</span></div>
        <Icon name="action" />
      </div>
    </footer>

    <div class="window dialog">
      <div class="wtitle"><Icon name="aa" /><span v-fit="210">Automation Anywhere Enterprise Client</span><Icon class="end" name="wx" /></div>
      <div class="panel">
        <Icon name="error" />
        <div class="msg"><p><span v-fit="212">Unable to find 'PUSH BUTTON' control.</span></p><p><span v-fit="671">An error occurred at line number 5 of Task 'Select_Formatting'. Open the Task in Workbench to view action at line number 5.</span></p></div>
      </div>
      <button class="ok"><span v-fit="17">OK</span></button>
    </div>

    <div class="window runtime">
      <div class="wtitle"><Icon name="aa" /><span v-fit="97">Run Time Window</span><div class="btns"><Icon name="wmin" /><Icon name="wmax" /><Icon name="wx" /></div></div>
      <div class="panel">
        <div class="path"><b v-fit="72">…Template &gt;</b><b v-fit="88">Select_Formatting</b></div>
        <div class="prog"><div class="pbar"><i></i></div><Icon name="pause" /><Icon name="stop" /></div>
        <div class="kv line"><b v-fit="30">Line :</b><span v-fit="28">5 of 9</span></div>
        <div class="kv"><b v-fit="42">Action :</b><span v-fit="130">Manage Windows Controls</span></div>
      </div>
      <div class="hint"><span v-fit="245">Use 'Pause' key to pause. Keep 'Esc' key pressed</span><span v-fit="40">to abort.</span></div>
    </div>
  </div>
</template>

<style>
body { margin: 0; overflow: hidden; }
.icon { display: block; flex: none; overflow: visible; font-family: "Open Sans", "Noto Sans", sans-serif; }
.strip { display: flex; align-items: center; white-space: pre; }
.strip > * { flex: none; }
.strip .label { line-height: 14px; }
.strip .cell { display: flex; justify-content: center; align-items: center; }
.strip .white { color: #fff; }
.strip .dim { color: #c98a76; }
.strip .raise { margin-top: -2px; }
.strip .dark { color: #444; }
.strip .mid { color: #777; }
.strip .pale { color: #bbb; }
.tabs .on { font-weight: 700; position: relative; }
.tabs .on::after { content: ""; position: absolute; left: 0; right: 0; bottom: -6px; height: 3px; background: #b7472a; }
.tabs .red { color: #b7472a; }
.tabs .grey { color: #666; }
.strip .fmt { font-size: 13px; color: #999; margin-top: -2px; }
.strip .fmt.b { font-weight: 700; }
.strip .fmt.i { font-style: italic; font-family: "Liberation Serif", serif; font-size: 14px; }
.strip .fmt.u { text-decoration: underline; text-underline-offset: 3px; }
.strip .fmt.s { text-shadow: 1px 1px 1px #aaa; }
.status .picked { height: 21px; background: #c8c6c4; }
.status .label { margin-top: -3px; }
.tray .lit { height: 38px; background: #414143; }
</style>

<style scoped>
.desktop { position: relative; width: 1600px; height: 900px; overflow: hidden; display: flex; flex-direction: column; background: #e6e6e6; color: #444; font: 12px/14px "Open Sans", "Noto Sans", sans-serif; }
.defs { position: absolute; }
.desktop > * { flex: none; }
.titlebar { position: relative; height: 34px; background: #b7472a; color: #fbd0c0; }
.clouds { position: absolute; right: 0; top: 0; }
.title-strip { position: relative; height: 34px; }
.picture-tools { position: absolute; left: 766px; top: 0; width: 88px; height: 34px; box-sizing: border-box; padding: 9px 0 0 11px; background: #a82b1a; color: #fff; white-space: pre; }

.tabs { height: 32px; display: flex; justify-content: space-between; align-items: center; background: #f3f2f1; font-size: 12.500px; }
.tabs > .strip { height: 32px; }
.actions { display: flex; gap: 9px; padding-right: 12px; }
.actions button { height: 23px; display: flex; align-items: center; gap: 4px; box-sizing: border-box; padding: 0 0 1px 7px; background: #fff; border: 1px solid #e1dfdd; border-radius: 2px; color: #b7472a; font: 600 12.500px/14px "Open Sans", sans-serif; white-space: pre; }
.share { width: 67px; }
.comments { width: 100px; }

.ribbon { display: flex; height: 94px; background: #f3f2f1; }
.group { position: relative; box-sizing: border-box; display: flex; flex-direction: column; }
.group::after { content: ""; position: absolute; right: 0; top: 2px; width: 1px; height: 88px; background: #b5b3b1; }
.g-clip { width: 165px; }
.g-slides { width: 176px; }
.g-font { width: 269px; }
.g-para { width: 322px; }
.g-draw { width: 356px; }
.g-edit { width: 99px; }
.g-voice { width: 58px; }
.body { flex: none; height: 77px; display: flex; }
.stack { flex-direction: column; }
.foot { flex: none; box-sizing: border-box; height: 17px; padding-top: 3px; color: #444; }
.w50 { width: 50px; }
.w40 { width: 40px; }
.w48 { width: 48px; }
.w43 { width: 43px; }
.w170 { width: 170px; }
.pic { height: 42px; }
.l1 { height: 10px; }
.l2 { height: 18px; }
.r1 { height: 42px; }
.r2 { height: 22px; }
.rows24 { padding-top: 2px; }
.rows23 { padding-top: 1px; }
.rows24 .strip { height: 24px; }
.rows23 .strip { height: 23px; }
.off .body { color: #b1aeab; }
.gallery { display: flex; box-sizing: border-box; width: 138px; height: 62px; margin: 4px 0 0 9px; border: 1px solid #c3c1bf; background: #fdfdfd; color: #444; }
.shapes { display: grid; grid-template-columns: repeat(6, 20px); grid-template-rows: repeat(3, 20px); width: 120px; }
.shapes span { display: flex; align-items: center; justify-content: center; }
.spin { width: 15px; margin-left: auto; display: flex; flex-direction: column; border-left: 1px solid #c3c1bf; }
.spin i { flex: 1; display: flex; flex-direction: column; align-items: center; justify-content: center; gap: 2px; border-bottom: 1px solid #c3c1bf; }
.spin i:last-child { border: 0; }
.spin b { width: 7px; height: 1px; background: #555; }
.spin .pale { background: #e4e2e0; }
.spin .pale svg { opacity: .4; }
.collapse { margin: 83px 0 0 136px; }

.workspace { height: 678px; display: flex; background: linear-gradient(#cdcdcd, #e6e6e6 7px); }
.nav { box-sizing: border-box; width: 199px; margin: 3px 0 2px; height: 673px; border-right: 1px solid #b8b8b8; padding-top: 15.500px; }
.thumb { display: flex; height: 99px; }
.num { width: 34px; box-sizing: border-box; padding: 0 0 0 10px; font-size: 15px; line-height: 13px; }
.num span { display: block; padding-left: 2px; height: 16px; }
.frame { width: 142px; height: 81px; box-sizing: border-box; border: 1px solid #bdbdbd; padding: 1px; background: #fff; }
.frame svg { display: block; }
.current .num { color: #d24726; width: 32px; }
.current .frame { width: 146px; height: 85px; margin-top: -2px; border: 3px solid #f47251; padding: 1px; }

.main { width: 1385px; display: flex; flex-direction: column; }
.slide { position: relative; width: 1080px; height: 608px; margin: 14px 0 0 152px; border: 1px solid #c0c0c0; background: #fff; }
.slide > svg { display: block; }
.table { position: absolute; left: 400px; top: 328px; width: 280px; height: 73px; font: 900 9.500px/12px Lato, sans-serif; }
.trow { display: grid; grid-template-columns: 45px 48px 47px 47px 47px 46px; border-bottom: 1px solid #ccc; box-sizing: border-box; overflow: hidden; }
.q0 { height: 37px; }
.q1 { height: 36px; }
.th { background: #d00428; color: #fff; display: flex; flex-direction: column; align-items: flex-start; white-space: pre; box-sizing: border-box; }
.q0 .th { padding-top: 13px; height: 36px; }
.q1 .th { padding-left: 1px; height: 35px; }
.td { box-sizing: border-box; border-right: 1px solid #d0d0d0; display: flex; justify-content: flex-end; align-items: center; padding: 2px 4px 0 0; color: #111; }
.q1 .td { padding-top: 0; }
.selection { position: absolute; left: 398px; top: 170px; width: 284px; height: 232px; box-sizing: border-box; border: 1px solid #999; }
.h { position: absolute; width: 7px; height: 7px; border: 2px solid #929292; border-radius: 50%; background: #fff; bottom: -6px; }
.a { left: -6px; }
.b { left: 135px; }
.c { right: -6px; }
.rot { position: absolute; left: 132px; top: -9px; width: 14px; height: 14px; border: 2px solid #999; border-radius: 50%; box-shadow: inset 0 0 0 1px #fff, inset 0 0 0 2px #999; }
.disclaimer { position: absolute; left: 318.500px; top: 592px; font: 10.700px/14px Lato, sans-serif; color: #4d4d57; white-space: pre; }
.notes { margin: auto 0 0 2px; height: 38px; border-top: 1px solid #b8b8b8; padding-left: 9px; line-height: 32px; font-size: 14px; color: #666; white-space: pre; }

.vscroll { width: 15px; padding-top: 3px; display: flex; flex-direction: column; align-items: center; }
.sb { width: 13px; height: 13px; display: flex; align-items: center; justify-content: center; border: 1px solid #ababab; background: #fff; }
.track { width: 15px; height: 550px; background: #dadada; display: flex; align-items: flex-end; }
.grip { width: 13px; height: 182px; background: #fff; border: 1px solid #ababab; border-bottom: 0; }
.jump { display: flex; flex-direction: column; margin-top: 5px; }
.jump.second { margin-top: 9px; }

.status { height: 22px; box-sizing: border-box; border-top: 1px solid #c6c6c6; background: #f3f2f1; font-size: 11px; }
.status .strip { height: 21px; }

.taskbar { height: 40px; display: flex; background: #2a2a2c; color: #fff; }
.start { width: 48px; display: flex; align-items: center; justify-content: center; }
.searchbox { width: 344px; box-sizing: border-box; border: 1px solid #bdbdbd; background: #f1f1f1; color: #333; display: flex; align-items: center; gap: 12px; padding-left: 11px; font-size: 14.500px; white-space: pre; }
.searchbox span { padding-top: 2px; }
.sys { width: 98px; height: 40px; }
.apps { display: flex; }
.app { position: relative; width: 49px; display: flex; align-items: center; justify-content: center; padding-top: 1px; box-sizing: border-box; }
.app.run::after { content: ""; position: absolute; left: 5px; bottom: 0; width: 40px; height: 2px; background: #76b9ed; }
.app.active { width: 48px; margin-left: 1px; background: #555557; }
.app.active::after { left: 0; width: 48px; }
.tray { margin-left: auto; width: 240px; display: flex; align-items: center; box-shadow: inset -4px 0 #2a2a2c, inset -5px 0 #666; }
.clock { width: 66px; margin: 0 11px 0 2px; display: flex; flex-direction: column; align-items: center; line-height: 18px; font-size: 12px; white-space: pre; }

.window { position: absolute; box-sizing: border-box; background: #323232; border: 1px solid #1e1e20; font-family: "Liberation Sans", Arial, sans-serif; white-space: pre; }
.wtitle { height: 22px; display: flex; align-items: center; padding-left: 2px; gap: 2px; background: linear-gradient(#6a6f7a, #50545e 2px, #45484f 8px, #333337 9px, #45464e); color: #fff; font-weight: 700; font-size: 11px; }
.panel { background: #eee; color: #000; }
.dialog { left: 401px; top: 342px; width: 797px; height: 175px; }
.dialog .end { margin-left: auto; margin-right: 4px; }
.dialog .panel { display: flex; width: 776px; height: 102px; margin: 12px 0 0 8px; box-sizing: border-box; padding: 11px 0 0 15px; gap: 13px; font-size: 12px; }
.msg p { margin: 7px 0 16px; line-height: 14px; }
.ok { display: block; width: 59px; height: 23px; margin: 8px auto 0 368px; padding: 2px 0 0; border: 1px solid #d4d4d4; border-radius: 3px; background: #cacaca; font: 12px/19px "Liberation Sans", sans-serif; color: #111; outline: 1px dotted #111; outline-offset: -3px; }
.runtime { left: 1316px; top: 708px; width: 264px; height: 152px; }
.btns { margin-left: auto; padding-right: 4px; display: flex; gap: 2px; }
.runtime .panel { width: 235px; height: 75px; margin: 10px 0 0 14px; box-sizing: border-box; padding: 5px 0 0 8px; font-size: 11px; line-height: 13px; }
.path { display: flex; gap: 4px; }
.prog { display: flex; align-items: center; margin: 2px 0 0 -2px; height: 13px; }
.pbar { width: 179px; height: 9px; border: 1px solid #999; border-right-color: #fff; border-bottom-color: #fff; padding: 1px; margin-right: 9px; }
.pbar i { display: block; width: 158px; height: 8px; background: #0078d7; }
.prog .icon + .icon { margin-left: 4px; }
.kv { display: flex; gap: 4px; }
.line { margin: 6px 0 5px; }
.hint { display: flex; flex-direction: column; align-items: flex-start; margin: 15px 0 0 7px; line-height: 13px; font-size: 11px; color: #e6e6e6; }
</style>
